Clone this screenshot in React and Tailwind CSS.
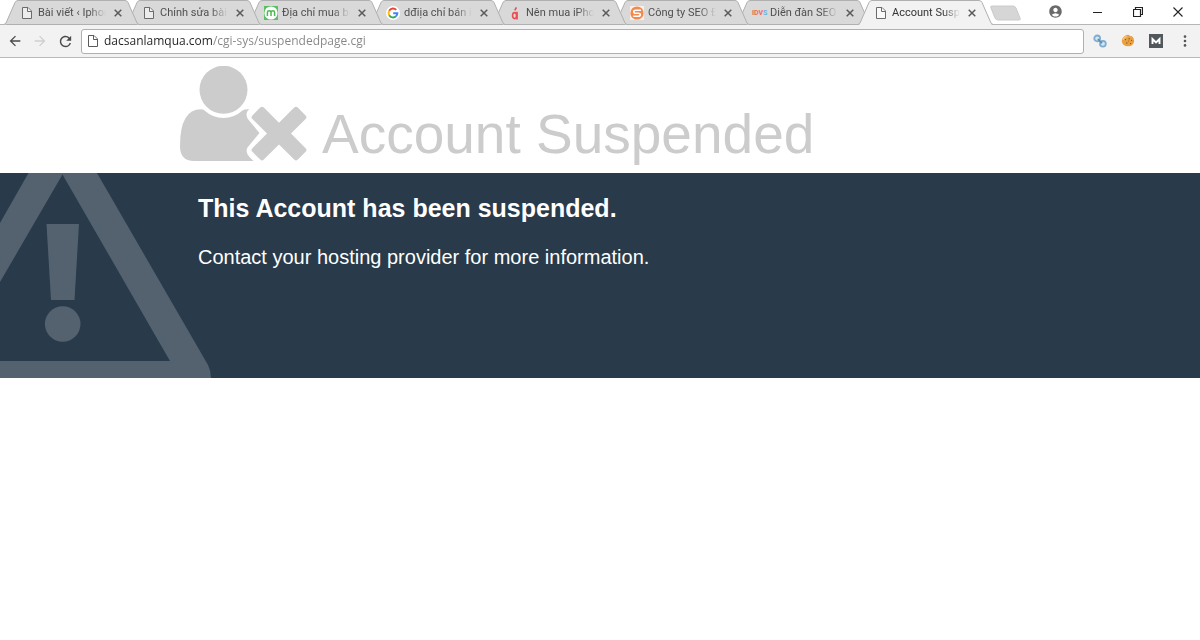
import { MdAccountCircle, MdArrowBack, MdArrowForward, MdRefresh } from "react-icons/md";

function PageIcon({ className }) {
  return (
    <svg viewBox="0 0 14 14" className={className} fill="#fff" fillOpacity=".5" stroke="currentColor">
      <path d="M2.500 1.500h5.500l3.500 3.500v7.500h-9z" />
      <path d="M7.500 1.500v4h4" />
    </svg>
  );
}

function TabPageIcon() {
  return <PageIcon className="size-[14px] text-[#6b6b6b]" />;
}

function MarketIcon() {
  return (
    <svg viewBox="0 0 14 14" className="size-[14px]">
      <rect width="14" height="14" fill="#5cbf61" />
      <circle cx="7" cy="7" r="6.6" fill="#fff" />
      <path
        d="M3.4 10V6.4Q3.4 4.8 5.2 4.8T7 6.4V10M7 6.4Q7 4.8 8.8 4.8T10.6 6.4V10"
        fill="none"
        stroke="#4db753"
        strokeWidth="1.5"
      />
    </svg>
  );
}

function GoogleIcon() {
  return (
    <svg viewBox="0 0 14 14" className="size-[14px]" fill="none" strokeWidth="1.9">
      <circle cx="7" cy="7" r="7" fill="#fff" />
      <path d="M10.2 3.8A4.4 4.4 0 0 0 3.2 4.8" stroke="#ea4335" />
      <path d="M3.2 4.8a4.4 4.4 0 0 0 0 4.4" stroke="#fbbc05" />
      <path d="M3.2 9.2a4.4 4.4 0 0 0 6.800 1.100" stroke="#34a853" />
      <path d="M10 10.300A4.400 4.400 0 0 0 11.400 7.200H7.200" stroke="#4285f4" />
    </svg>
  );
}

function AccentIcon() {
  return (
    <svg viewBox="0 0 14 14" className="size-[14px]" fill="none" stroke="#ef4b50">
      <ellipse cx="6.6" cy="9.6" rx="2" ry="3" strokeWidth="1.6" />
      <path d="M9 5.8v7.600" strokeWidth="1.7" />
      <path d="M6.800 4.400 8.400 1.400" strokeWidth="1.6" />
    </svg>
  );
}

function SeoIcon() {
  return (
    <svg viewBox="0 0 14 14" className="size-[14px]">
      <rect width="14" height="14" fill="#fbeee6" />
      <circle cx="7" cy="7" r="6.6" fill="#f28a50" />
      <path
        d="M11 4.2H5.9Q3.8 4.2 3.8 5.8T5.9 7.3H8.2Q10.3 7.3 10.3 8.8T8.2 10.3H3.2"
        fill="none"
        stroke="#fff"
        strokeWidth="1.6"
      />
    </svg>
  );
}

function ForumIcon() {
  return (
    <span className="flex font-['Roboto',sans-serif] text-[7px] leading-[14px] font-bold text-[#ee6b55]">
      IDV<span className="text-[#62b5e5]">S</span>
    </span>
  );
}

const tabs = [
  { title: "Bài viết ‹ Iphon", Icon: TabPageIcon },
  { title: "Chỉnh sửa bài v", Icon: TabPageIcon },
  { title: "Địa chỉ mua bá", Icon: MarketIcon },
  { title: "dđiịa chỉ bán ip", Icon: GoogleIcon },
  { title: "Nên mua iPhon", Icon: AccentIcon },
  { title: "Công ty SEO Đ", Icon: SeoIcon },
  { title: "Diễn đàn SEO &", Icon: ForumIcon },
  { title: "Account Suspe", Icon: TabPageIcon, active: true },
];

function Tab({ title, Icon, active, order }) {
  return (
    <div
      className="relative -ml-[13px] flex h-[25px] w-[135px] items-center pt-px pr-[13px] pl-4"
      style={{ zIndex: active ? 20 : order }}
    >
      <svg
        viewBox="0 0 135 25"
        preserveAspectRatio="none"
        className="absolute inset-0 size-full"
        fill={active ? "#f2f2f2" : "#d9d9d9"}
        stroke="#b0b0b0"
      >
        <path d="M0 24.500 2 23 11 2.500Q12 .500 14 .500H121Q123 .500 124 2.500L133 23 135 24.500" />
        <path d="M2 24.500H133" stroke={active ? "#f2f2f2" : "#b0b0b0"} />
      </svg>
      <button className="relative flex min-w-0 flex-1 items-center gap-1 text-left">
        <span className="w-[14px] shrink-0">
          <Icon />
        </span>
        <span
          className={`min-w-0 flex-1 mask-r-from-75% font-['Roboto',sans-serif] text-[11px] leading-4 whitespace-nowrap ${
            active ? "text-[#333]" : "text-[#4f4f4f]"
          }`}
        >
          {title}
        </span>
      </button>
      <button aria-label="Close tab" className="relative ml-1 flex size-4 items-center justify-center">
        <svg viewBox="0 0 8 8" className="size-2" stroke="#5a5a5a" strokeWidth="1.5">
          <path d="M.7.7l6.6 6.6M7.3.7.7 7.3" />
        </svg>
      </button>
    </div>
  );
}

function TabStrip() {
  return (
    <div className="flex h-[25px] border-b border-[#b6b6b6] bg-white">
      <div className="flex h-[25px] pl-[17px]">
        {tabs.map((tab, i) => (
          <Tab key={tab.title} {...tab} order={tabs.length - i} />
        ))}
      </div>
      <button aria-label="New tab" className="-ml-1 mt-[5px] h-4 w-8">
        <svg viewBox="0 0 32 16" className="h-4 w-8">
          <path d="M3 1h21q2 0 3 2l4 10q1 2-1 2H9q-2 0-3-2L2 3q-1-2 1-2z" fill="#d6d6d6" stroke="#cacaca" />
        </svg>
      </button>
      <div className="ml-auto flex items-start pt-1">
        <button aria-label="Profile" className="mr-2 flex w-[30px] justify-center">
          <MdAccountCircle className="size-[15px] text-[#6a6a6a]" />
        </button>
        <button aria-label="Minimize" className="flex h-4 w-10 items-center justify-center">
          <svg viewBox="0 0 10 10" className="size-[10px]" stroke="#222">
            <path d="M0 5.5h9" />
          </svg>
        </button>
        <button aria-label="Restore" className="flex h-4 w-10 items-center justify-center">
          <svg viewBox="0 0 10 10" className="size-[10px]" fill="none" stroke="#222" strokeWidth="1.2">
            <path d="M.5 2.5h7v7h-7zM2.5 2.5v-2h7v7h-2" />
          </svg>
        </button>
        <button aria-label="Close" className="mr-[2px] flex h-4 w-10 items-center justify-center">
          <svg viewBox="0 0 10 10" className="size-[10px]" stroke="#222" strokeWidth="1.1">
            <path d="M.5.5l9 9M9.5.5l-9 9" />
          </svg>
        </button>
      </div>
    </div>
  );
}

function LinksIcon() {
  return (
    <svg viewBox="0 0 14 14" className="size-[14px]" fill="#d5e6f3" stroke="#7fabd0">
      <circle cx="4.2" cy="4.4" r="2.900" strokeWidth="1.8" />
      <circle cx="9.900" cy="9.800" r="2.900" strokeWidth="1.8" />
      <path d="M4.800 5l4.400 4.200" stroke="#5d88ae" strokeWidth="1.4" />
    </svg>
  );
}

function CookieIcon() {
  return (
    <svg viewBox="0 0 14 14" className="size-[14px]">
      <path
        d="M5 1.200Q7.200 0 8.600 1.600 9.400 2.400 10.800 2 13.200 3.800 13.200 7.200A6.300 6 0 0 1 .8 7.600Q.6 3.600 5 1.200z"
        fill="#e9a03f"
      />
      <path d="M2 6Q3 2.8 6.4 2.4" stroke="#f7c377" strokeWidth="1.4" fill="none" />
      <g fill="#8f5522">
        <circle cx="4.4" cy="5.6" r=".7" />
        <circle cx="8.2" cy="4.800" r=".7" />
        <circle cx="5.8" cy="9" r=".7" />
        <circle cx="9.6" cy="9.6" r=".7" />
        <circle cx="10.600" cy="6.4" r=".6" />
        <circle cx="7.600" cy="7" r=".5" />
      </g>
    </svg>
  );
}

function MozIcon() {
  return (
    <svg viewBox="0 0 14 14" className="size-[14px]">
      <rect width="14" height="14" fill="#51585c" />
      <path d="M3.5 10V5L7 8.4 10.5 5v5" fill="none" stroke="#fff" strokeWidth="1.9" />
    </svg>
  );
}

function Toolbar() {
  return (
    <div className="flex h-[33px] items-center border-b border-[#b9b9b9] bg-[#f2f2f2] pr-2 pl-[7px]">
      <div className="flex items-center gap-[9px] text-[#4a4a4a]">
        <button aria-label="Back">
          <MdArrowBack className="size-4" stroke="currentColor" />
        </button>
        <button aria-label="Forward" disabled className="text-[#cfcfcf]">
          <MdArrowForward className="size-4" />
        </button>
        <button aria-label="Reload">
          <MdRefresh className="size-[17px]" stroke="currentColor" />
        </button>
      </div>
      <label className="ml-[7px] flex h-[25px] flex-1 items-center gap-1 rounded-[3px] border border-[#b0b0b0] bg-white pl-1">
        <PageIcon className="size-[14px] text-[#5a5a5a]" />
        <input
          type="text"
          aria-label="Address"
          defaultValue="dacsanlamqua.com/cgi-sys/suspendedpage.cgi"
          className="min-w-0 flex-1 bg-[linear-gradient(to_right,#222_108px,#858585_108px)] bg-clip-text text-[12px] leading-4 text-transparent outline-none"
        />
      </label>
      <div className="flex items-center gap-[14px] pl-[9px]">
        <button aria-label="Links">
          <LinksIcon />
        </button>
        <button aria-label="Cookies">
          <CookieIcon />
        </button>
        <button aria-label="MozBar">
          <MozIcon />
        </button>
        <button aria-label="Menu" className="flex w-[15px] justify-center">
          <svg viewBox="0 0 4 12" className="h-3 w-1" fill="#555">
            <circle cx="2" cy="1.6" r="1.3" />
            <circle cx="2" cy="6" r="1.3" />
            <circle cx="2" cy="10.4" r="1.3" />
          </svg>
        </button>
      </div>
    </div>
  );
}

function SuspendedUserIcon() {
  return (
    <svg viewBox="0 0 127 95" className="h-[95px] w-[127px] shrink-0" fill="#ccc">
      <circle cx="43.5" cy="23.8" r="24" />
      <path d="M21 43.3Q23 43.3 24.5 44.5 33 52 43.5 52T62.500 44.500Q64.500 43 69.500 43.300 66.500 45 66.500 49 66.500 52 69.500 55L79.500 67 69.500 79Q66.500 82 66.500 84.500 66.500 88 69.500 91L73.500 95H14Q0 95 0 80 0 43.300 21 43.300z" />
      <path d="M80.200 41.600Q82 39.800 83.800 41.600L99 56.800 114.200 41.600Q116 39.800 117.800 41.600L125.600 49.400Q127.400 51.200 125.600 53L111 67.600 125.600 82.200Q127.400 84 125.600 85.800L117.800 93.600Q116 95.400 114.200 93.600L99 78.400 83.800 93.600Q82 95.400 80.200 93.600L72.400 85.800Q70.600 84 72.400 82.200L87 67.600 72.400 53Q70.600 51.200 72.400 49.400z" />
    </svg>
  );
}

function WarningIcon() {
  return (
    <svg viewBox="0 0 211 205" className="absolute top-0 left-0 h-[205px] w-[211px]" fill="#54626f">
      <path
        fillRule="evenodd"
        d="M28.500 0H97L208 192Q211 198 211 205H0V188H170L62.500 1.500 0 109V50z"
      />
      <path d="M46.500 51H79L74.500 127H51z" />
      <circle cx="62.700" cy="151" r="17.800" />
    </svg>
  );
}

function SuspendedPage() {
  return (
    <main className="font-['Liberation_Sans',Arial,sans-serif]">
      <header className="flex items-start gap-[15px] px-[15%] pt-2 pb-[11px]">
        <SuspendedUserIcon />
        <h1 className="pt-10 text-[55px] leading-[56px] whitespace-nowrap text-[#ccc]">Account Suspended</h1>
      </header>
      <section className="relative min-h-[205px] bg-[#293a4a] px-[15%] pt-5 text-white">
        <WarningIcon />
        <div className="relative pl-[18px]">
          <h2 className="text-[25px] leading-[30px] font-bold">This Account has been suspended.</h2>
          <p className="mt-5 text-[20px] leading-7">Contact your hosting provider for more information.</p>
        </div>
      </section>
    </main>
  );
}

export default function App() {
  return (
    <div className="min-h-screen bg-white font-['Open_Sans','Noto_Sans',sans-serif]">
      <TabStrip />
      <Toolbar />
      <SuspendedPage />
    </div>
  );
}
